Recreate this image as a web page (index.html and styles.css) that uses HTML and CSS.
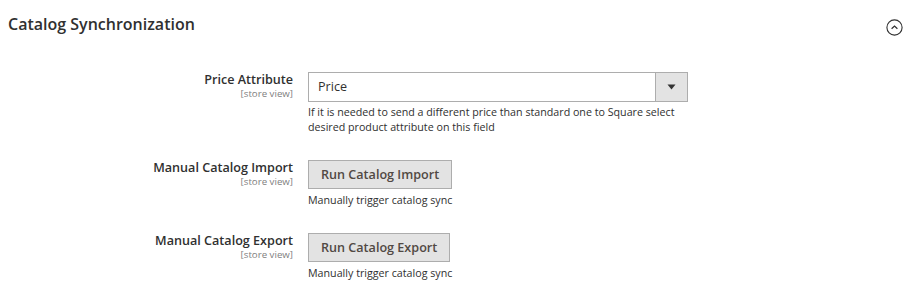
FILE: index.html
```html
<!DOCTYPE html>
<html>
<head>
<meta charset="utf-8">
<link rel="stylesheet" href="styles.css">
</head>
<body>
<div class="section">
  <div class="section-head">
    <h2 class="section-title">Catalog Synchronization</h2>
    <span class="toggle">
      <svg width="17" height="17" viewBox="0 0 17 17"><circle cx="8.5" cy="8.5" r="7.6" fill="none" stroke="#303030" stroke-width="1.1"/><path d="M5.6 9.8 L8.5 7 L11.4 9.8" fill="none" stroke="#303030" stroke-width="1.2"/></svg>
    </span>
  </div>
  <div class="rows">
    <div class="row">
      <div class="label"><span class="label-text">Price Attribute</span><span class="scope">[store view]</span></div>
      <div class="field">
        <div class="select"><span class="select-value">Price</span><span class="select-arrow"><svg width="9" height="6" viewBox="0 0 9 6"><path d="M0.5 0.5 H8.5 L4.5 5.5 Z" fill="#333"/></svg></span></div>
        <p class="note note-select">If it is needed to send a different price than standard one to Square select desired product attribute on this field</p>
      </div>
    </div>
    <div class="row">
      <div class="label"><span class="label-text">Manual Catalog Import</span><span class="scope">[store view]</span></div>
      <div class="field">
        <button class="btn">Run Catalog Import</button>
        <p class="note">Manually trigger catalog sync</p>
      </div>
    </div>
    <div class="row">
      <div class="label"><span class="label-text">Manual Catalog Export</span><span class="scope">[store view]</span></div>
      <div class="field">
        <button class="btn">Run Catalog Export</button>
        <p class="note">Manually trigger catalog sync</p>
      </div>
    </div>
  </div>
</div>
</body>
</html>
```
FILE: styles.css
```css
* { box-sizing: border-box; }
html, body { margin: 0; padding: 0; background: #fff; }
body {
  font-family: "Open Sans", "Liberation Sans", sans-serif;
  color: #303030;
}
.section { padding: 0 8px; }
.section-head {
  display: flex;
  justify-content: space-between;
  align-items: center;
  height: 46px;
  padding-top: 1px;
}
.section-title {
  margin: 0;
  font-size: 16px;
  font-weight: 600;
  color: #303030;
  line-height: 22px;
}
.toggle { display: flex; margin-right: 4px; margin-top: 8px; }
.rows { padding-top: 26px; }
.row {
  display: grid;
  grid-template-columns: 285px 380px;
  column-gap: 15px;
  margin-bottom: 25px;
}
.label {
  display: flex;
  flex-direction: column;
  align-items: flex-end;
  text-align: right;
}
.label-text {
  font-size: 12.6px;
  font-weight: 600;
  line-height: 16px;
}
.scope {
  font-size: 9.7px;
  color: #808080;
  line-height: 12px;
}
.select {
  display: flex;
  height: 30px;
  border: 1px solid #adadad;
  background: #fff;
}
.select-value {
  flex: 1;
  font-size: 12.6px;
  line-height: 28px;
  padding-left: 9px;
}
.select-arrow {
  width: 32px;
  background: #e3e3e3;
  border-left: 1px solid #adadad;
  display: flex;
  align-items: center;
  justify-content: center;
}
.note {
  margin: 4px 0 0;
  font-size: 10.7px;
  line-height: 15px;
}
.note-select { margin-top: 3px; }
.btn {
  display: block;
  height: 29px;
  padding: 0 12px;
  font-family: inherit;
  font-size: 12.6px;
  font-weight: 600;
  color: #514943;
  background: #e3e3e3;
  border: 1px solid #adadad;
  border-radius: 0;
}
```
